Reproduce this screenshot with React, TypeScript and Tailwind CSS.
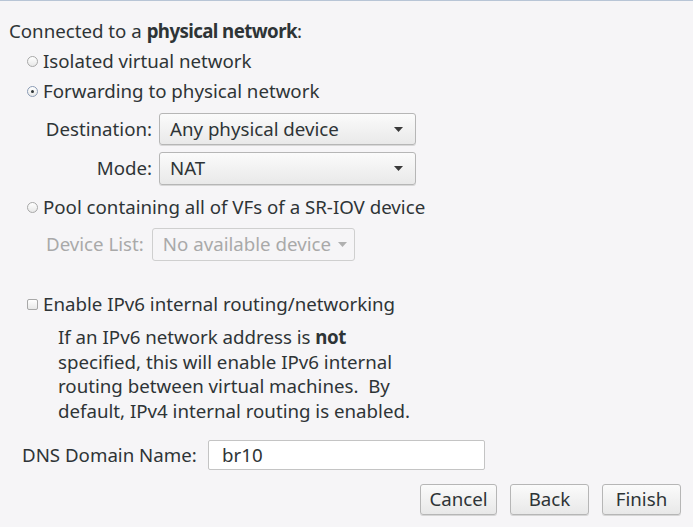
import { ReactNode } from "react";

const font = { fontFamily: '"Noto Sans", "Open Sans", sans-serif' };

function Radio({ checked }: { checked?: boolean }) {
  return (
    <span
      className={`mr-[5px] flex h-[11px] w-[11px] items-center justify-center rounded-full border bg-gradient-to-b from-white to-[#e8e8e8] ${
        checked ? "border-[#8a9bb5]" : "border-[#a8a8a8]"
      }`}
    >
      {checked && <span className="h-[3px] w-[3px] rounded-full bg-[#2e3436]" />}
    </span>
  );
}

function Select({ value, width, disabled }: { value: string; width: string; disabled?: boolean }) {
  return (
    <div
      className={`flex h-full items-center whitespace-nowrap rounded-[3px] border pl-[10px] ${width} ${
        disabled
          ? "gap-[7px] border-[#cfcfcf] bg-[#f6f5f7] text-[#a9a9a9]"
          : "justify-between pr-[12px] border-[#b6b6b6] bg-gradient-to-b from-[#fbfbfb] to-[#e9e9e9] shadow-[0_1px_0_#d8d8d8]"
      }`}
    >
      <span>{value}</span>
      <svg width="9" height="5" viewBox="0 0 9 5">
        <path d="M0 0h9L4.5 5z" fill={disabled ? "#b0b0b0" : "#3a3a3a"} />
      </svg>
    </div>
  );
}

function Button({ children, width }: { children: ReactNode; width: string }) {
  return (
    <button
      className={`flex h-[31px] items-center justify-center rounded-[3px] border border-[#b6b6b6] bg-gradient-to-b from-[#fbfbfb] to-[#e8e8e8] shadow-[0_1px_0_#d6d6d6] text-[#2e3436] ${width}`}
    >
      {children}
    </button>
  );
}

export default function App() {
  return (
    <div
      className="h-[527px] w-[693px] overflow-hidden border-t border-[#b8c5d6] bg-[#f6f5f7] text-[18.7px] leading-none text-[#2e3436]"
      style={font}
    >
      <div className="flex flex-col pt-[15px]">
        <div className="flex h-[30px] items-center pl-[9px]">
          Connected to a&nbsp;<b className="font-bold tracking-[-0.6px]">physical network</b>:
        </div>
        <div className="flex h-[30px] items-center pl-[27px]">
          <Radio />
          Isolated virtual network
        </div>
        <div className="flex h-[30px] items-center pl-[27px]">
          <Radio checked />
          Forwarding to physical network
        </div>

        <div className="mt-[7px] grid grid-cols-[106px_auto] gap-x-[7px] gap-y-[7px] pl-[46px]">
          <div className="flex h-[32px] items-center justify-end">Destination:</div>
          <div className="h-[32px]">
            <Select value="Any physical device" width="w-[257px]" />
          </div>
          <div className="flex h-[33px] items-center justify-end">Mode:</div>
          <div className="h-[33px]">
            <Select value="NAT" width="w-[257px]" />
          </div>
        </div>

        <div className="mt-[7px] flex h-[30px] items-center pl-[27px]">
          <Radio />
          Pool containing all of VFs of a SR-IOV device
        </div>
        <div className="mt-[6px] flex h-[33px] items-center pl-[46px] text-[#a9a9a9]">
          <span className="mr-[8px]">Device List:</span>
          <div className="h-[33px]">
            <Select value="No available device" width="w-[203px]" disabled />
          </div>
        </div>

        <div className="mt-[28px] flex h-[30px] items-center pl-[27px]">
          <span className="mr-[5px] h-[11px] w-[11px] rounded-[2px] border border-[#a8a8a8] bg-gradient-to-b from-white to-[#e8e8e8]" />
          Enable IPv6 internal routing/networking
        </div>
        <p className="mt-[6px] pl-[58px] leading-[24.5px]">
          If an IPv6 network address is <b className="font-bold tracking-[-0.4px]">not</b>
          <br />
          specified, this will enable IPv6 internal
          <br />
          routing between virtual machines.&nbsp; By
          <br />
          default, IPv4 internal routing is enabled.
        </p>

        <div className="mt-[17px] flex h-[30px] items-center pl-[22px]">
          <span className="w-[186px]">DNS Domain Name:</span>
          <div className="flex h-[30px] w-[277px] items-center rounded-[2px] border border-[#c4c4c4] bg-white pl-[13px]">
            br10
          </div>
        </div>

        <div className="mt-[14px] flex justify-end gap-[13px] pr-[12px]">
          <Button width="w-[77px]">Cancel</Button>
          <Button width="w-[79px]">Back</Button>
          <Button width="w-[79px]">Finish</Button>
        </div>
      </div>
    </div>
  );
}
